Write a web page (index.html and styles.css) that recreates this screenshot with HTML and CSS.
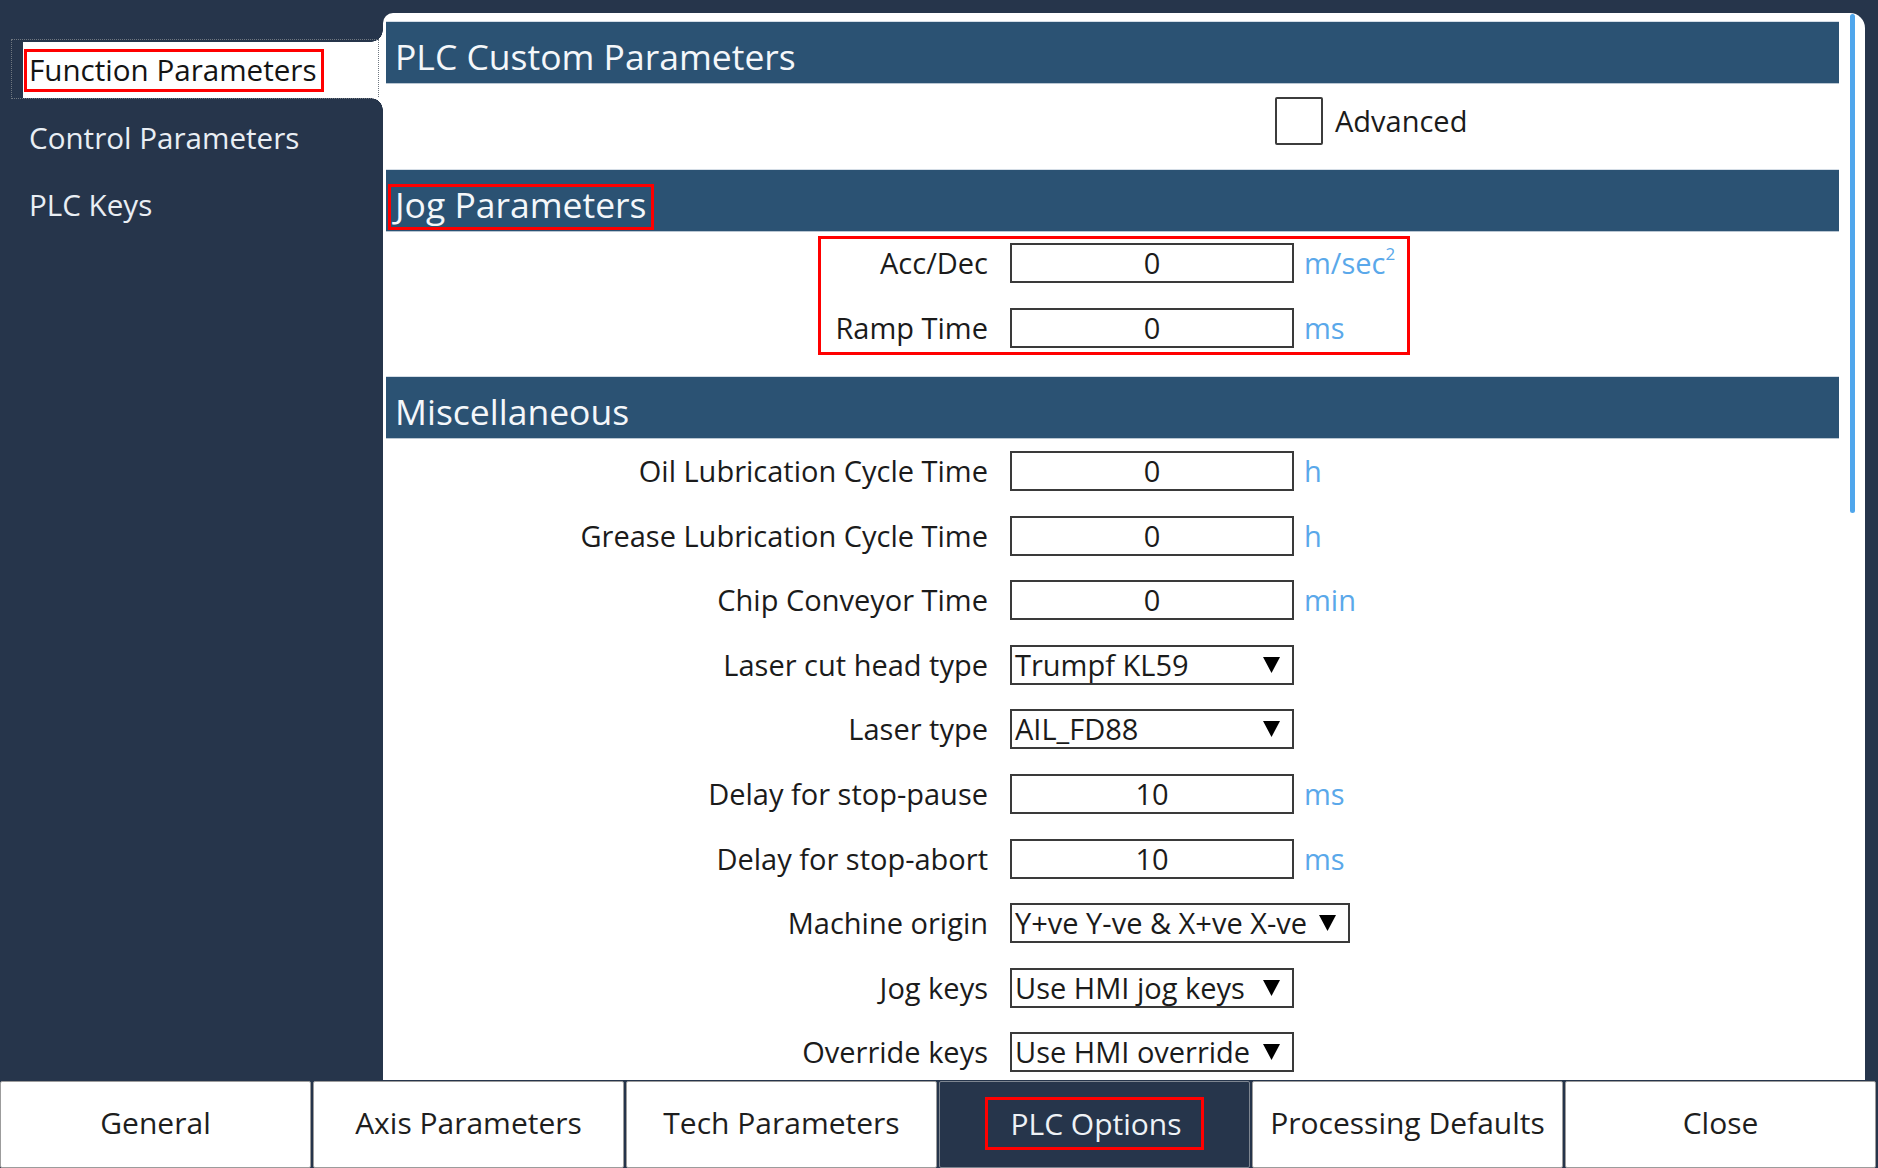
FILE: index.html
```html
<!DOCTYPE html>
<html lang="en">
<head>
<meta charset="utf-8">
<title>PLC Options</title>
<link rel="stylesheet" href="styles.css">
</head>
<body>
<div class="app">
  <div class="top">
    <nav class="sidebar">
      <div class="nav-item active">
        <span class="focus-ring"></span>
        <span class="nav-label boxed">Function Parameters</span>
      </div>
      <div class="nav-item"><span class="nav-label">Control Parameters</span></div>
      <div class="nav-item"><span class="nav-label">PLC Keys</span></div>
    </nav>

    <main class="panel">
      <div class="content">
        <h2 class="section-head">PLC Custom Parameters</h2>
        <div class="adv-row">
          <span class="checkbox"></span>
          <span class="adv-label">Advanced</span>
        </div>

        <h2 class="section-head"><span class="head-boxed">Jog Parameters</span></h2>
        <div class="form jog">
          <div class="annot"></div>
          <div class="row"><span class="lbl">Acc/Dec</span><span class="field num">0</span><span class="unit">m/sec<sup>2</sup></span></div>
          <div class="row"><span class="lbl">Ramp Time</span><span class="field num">0</span><span class="unit">ms</span></div>
        </div>

        <h2 class="section-head">Miscellaneous</h2>
        <div class="form misc">
          <div class="row"><span class="lbl">Oil Lubrication Cycle Time</span><span class="field num">0</span><span class="unit">h</span></div>
          <div class="row"><span class="lbl">Grease Lubrication Cycle Time</span><span class="field num">0</span><span class="unit">h</span></div>
          <div class="row"><span class="lbl">Chip Conveyor Time</span><span class="field num">0</span><span class="unit">min</span></div>
          <div class="row"><span class="lbl">Laser cut head type</span><span class="field select"><span class="sel-text">Trumpf KL59</span><svg class="arrow" viewBox="0 0 17 16" width="17" height="16"><polygon points="0,0 17,0 8.5,16" fill="#000"/></svg></span><span class="unit"></span></div>
          <div class="row"><span class="lbl">Laser type</span><span class="field select"><span class="sel-text">AIL_FD88</span><svg class="arrow" viewBox="0 0 17 16" width="17" height="16"><polygon points="0,0 17,0 8.5,16" fill="#000"/></svg></span><span class="unit"></span></div>
          <div class="row"><span class="lbl">Delay for stop-pause</span><span class="field num">10</span><span class="unit">ms</span></div>
          <div class="row"><span class="lbl">Delay for stop-abort</span><span class="field num">10</span><span class="unit">ms</span></div>
          <div class="row"><span class="lbl">Machine origin</span><span class="field select wide"><span class="sel-text">Y+ve Y-ve &amp; X+ve X-ve</span><svg class="arrow" viewBox="0 0 17 16" width="17" height="16"><polygon points="0,0 17,0 8.5,16" fill="#000"/></svg></span><span class="unit"></span></div>
          <div class="row"><span class="lbl">Jog keys</span><span class="field select"><span class="sel-text">Use HMI jog keys</span><svg class="arrow" viewBox="0 0 17 16" width="17" height="16"><polygon points="0,0 17,0 8.5,16" fill="#000"/></svg></span><span class="unit"></span></div>
          <div class="row"><span class="lbl">Override keys</span><span class="field select"><span class="sel-text">Use HMI override</span><svg class="arrow" viewBox="0 0 17 16" width="17" height="16"><polygon points="0,0 17,0 8.5,16" fill="#000"/></svg></span><span class="unit"></span></div>
        </div>
      </div>
      <div class="scrollbar"></div>
    </main>
  </div>

  <footer class="tabs">
    <div class="tab">General</div>
    <div class="tab">Axis Parameters</div>
    <div class="tab">Tech Parameters</div>
    <div class="tab active"><span class="tab-boxed">PLC Options</span></div>
    <div class="tab">Processing Defaults</div>
    <div class="tab">Close</div>
  </footer>
</div>
</body>
</html>
```

FILE: styles.css
```css
* { box-sizing: border-box; }

html, body {
  margin: 0;
  padding: 0;
}

body {
  width: 1878px;
  height: 1168px;
  overflow: hidden;
  background: #26354b;
  font-family: "Open Sans", "DejaVu Sans", sans-serif;
  font-size: 29px;
  color: #1b1b1b;
}

.app {
  display: grid;
  grid-template-rows: 1080px 88px;
  height: 1168px;
}

.top {
  display: flex;
  overflow: hidden;
}

/* ---------- sidebar ---------- */
.sidebar {
  width: 383px;
  flex: 0 0 383px;
  padding-top: 42px;
  display: flex;
  flex-direction: column;
  gap: 11px;
  font-size: 29.6px;
}

.nav-item {
  position: relative;
  height: 56px;
  margin-left: 23px;
  padding-left: 1px;
  display: flex;
  align-items: center;
  color: #e9eef4;
}

.nav-label {
  display: inline-block;
  line-height: 37px;
  padding: 0 4px 0 2px;
  border: 3px solid transparent;
  white-space: nowrap;
}

.nav-item.active {
  background: #fff;
  color: #141414;
}

.nav-item.active .boxed {
  border-color: #ff0000;
  line-height: 35px;
  padding-bottom: 2px;
}

.nav-item.active::before,
.nav-item.active::after {
  content: "";
  position: absolute;
  right: 0;
  width: 12px;
  height: 12px;
}

.nav-item.active::before {
  top: -12px;
  background: radial-gradient(circle at 0 0, transparent 11.5px, #fff 12px);
}

.nav-item.active::after {
  bottom: -12px;
  background: radial-gradient(circle at 0 100%, transparent 11.5px, #fff 12px);
}

.focus-ring {
  position: absolute;
  left: -12px;
  top: -3px;
  right: 4px;
  bottom: -1px;
  border: 1px dotted #6f7780;
  pointer-events: none;
}

/* ---------- main panel ---------- */
.panel {
  position: relative;
  flex: 1;
  margin: 13px 13px 0 0;
  background: #fff;
  border-radius: 10px 15px 0 0;
  overflow: hidden;
}

.content {
  padding: 9px 26px 0 3px;
}

.section-head {
  margin: 0;
  height: 61px;
  padding: 11px 0 0 9px;
  background: #2b5273;
  box-shadow: 0 1px 0 #b9c6d2, 0 -1px 0 #d4dde6;
  color: #f4f7fa;
  font-size: 35.5px;
  font-weight: 400;
  line-height: 47px;
  white-space: nowrap;
}

.head-boxed {
  display: inline-block;
  margin-left: -7px;
  margin-top: 3px;
  padding: 0 4px 6px 4px;
  border: 3px solid #ff0000;
  line-height: 34px;
}

.adv-row {
  display: flex;
  align-items: center;
  gap: 12px;
  padding: 14px 0 25px 889px;
}

.checkbox {
  width: 48px;
  height: 48px;
  border: 2px solid #3c3c3c;
  border-radius: 2px;
  background: #fff;
}

.adv-label {
  line-height: 40px;
}

/* ---------- forms ---------- */
.form {
  position: relative;
  display: flex;
  flex-direction: column;
}

.form.jog {
  padding: 12px 0 29px;
  gap: 25px;
}

.form.misc {
  padding: 13px 0 0;
  gap: 24.6px;
}

.annot {
  position: absolute;
  left: 432px;
  top: 5px;
  width: 592px;
  height: 119px;
  border: 3px solid #ff0000;
  pointer-events: none;
}

.row {
  display: grid;
  grid-template-columns: 624px auto 1fr;
  align-items: center;
  height: 40px;
}

.lbl {
  padding-right: 22px;
  text-align: right;
  line-height: 40px;
  white-space: nowrap;
}

.field {
  height: 40px;
  width: 284px;
  border: 2px solid #3a3a3a;
  background: #fff;
  line-height: 36px;
  white-space: nowrap;
}

.field.num {
  text-align: center;
}

.field.select {
  display: flex;
  align-items: center;
  padding: 0 12px 0 3px;
}

.field.select.wide {
  width: 340px;
}

.sel-text {
  flex: 1;
}

.arrow {
  flex: 0 0 auto;
}

.unit {
  margin-left: 10px;
  color: #5aa8ea;
  line-height: 40px;
}

.unit sup {
  font-size: 17px;
  line-height: 0;
  vertical-align: 14px;
}

.scrollbar {
  position: absolute;
  right: 10px;
  top: 1px;
  width: 5px;
  height: 499px;
  border-radius: 3px;
  background: #4fa6ec;
}

/* ---------- bottom tabs ---------- */
.tabs {
  display: grid;
  grid-template-columns: repeat(6, 1fr);
  gap: 2px;
  padding: 1px 2px 0 0;
  font-size: 30px;
}

.tab {
  display: flex;
  align-items: center;
  justify-content: center;
  padding-bottom: 4px;
  background: #fff;
  border: 1px solid #9c9c9c;
  border-radius: 2px;
  color: #1e1e1e;
  white-space: nowrap;
}

.tab.active {
  background: #26354b;
  border-color: #7d8590;
  color: #eef2f6;
}

.tab-boxed {
  display: inline-block;
  line-height: 47px;
  padding: 0 19px 0 22px;
  border: 3px solid #ff0000;
  margin-top: 2px;
}
```
